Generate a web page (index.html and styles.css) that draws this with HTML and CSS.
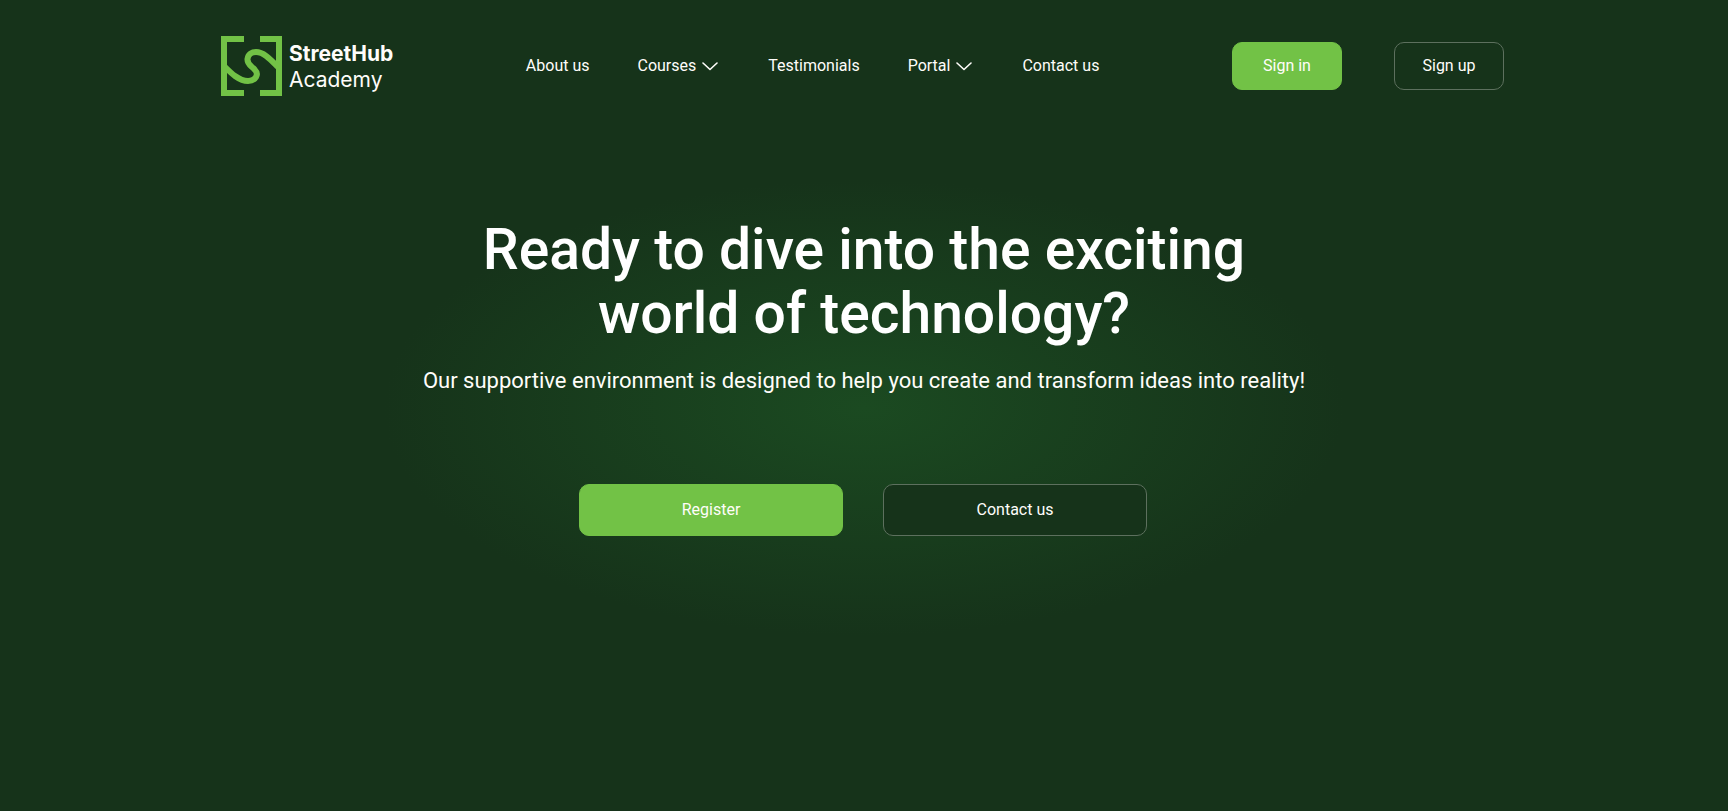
FILE: index.html
```html
<!DOCTYPE html>
<html lang="en">
<head>
<meta charset="utf-8">
<meta name="viewport" content="width=device-width, initial-scale=1">
<title>StreetHub Academy</title>
<link rel="stylesheet" href="styles.css">
</head>
<body>
<header class="header">
  <a class="brand" href="#">
    <svg class="brand-mark" viewBox="0 0 61 60" fill="none" aria-hidden="true">
      <path fill="#72c246" d="M0 0H23V6H6V54H23V60H0ZM39 0H61V60H39V54H55V6H39Z"/>
      <path stroke="#72c246" stroke-width="6" d="M4 31C10 37 18 45 27 45C35 45 38 38 34 34C31 30 26 29 26.500 23C27 18 31 16 35 16C43 16 50 24 57 31"/>
    </svg>
    <span class="brand-name"><strong>StreetHub</strong><span>Academy</span></span>
  </a>
  <nav class="nav" aria-label="Main">
    <a class="nav-link" href="#">About us</a>
    <a class="nav-link" href="#">Courses
      <svg class="chevron" viewBox="0 0 18 10" fill="none" aria-hidden="true"><path d="M1 2L8 8.500L15 2" stroke="currentColor" stroke-width="1.600" stroke-linecap="round" stroke-linejoin="round"/></svg>
    </a>
    <a class="nav-link" href="#">Testimonials</a>
    <a class="nav-link" href="#">Portal
      <svg class="chevron" viewBox="0 0 18 10" fill="none" aria-hidden="true"><path d="M1 2L8 8.500L15 2" stroke="currentColor" stroke-width="1.600" stroke-linecap="round" stroke-linejoin="round"/></svg>
    </a>
    <a class="nav-link" href="#">Contact us</a>
  </nav>
  <div class="account">
    <button class="button button-primary" type="button">Sign in</button>
    <button class="button button-outline" type="button">Sign up</button>
  </div>
</header>
<main class="hero">
  <h1 class="hero-title">Ready to dive into the exciting world of technology?</h1>
  <p class="hero-text">Our supportive environment is designed to help you create and transform ideas into reality!</p>
  <div class="hero-actions">
    <button class="button button-primary button-wide" type="button">Register</button>
    <button class="button button-outline button-wide" type="button">Contact us</button>
  </div>
</main>
</body>
</html>
```
FILE: styles.css
```css
* {
  box-sizing: border-box;
}

body {
  margin: 0;
  min-height: 100vh;
  background: radial-gradient(ellipse 480px 228px at 50% 408px, #1b4a21, #16331a) #16331a;
  color: #fffdfa;
  font: 16px/24px Roboto, "Liberation Sans", sans-serif;
}

a {
  color: inherit;
  text-decoration: none;
}

.header {
  display: flex;
  align-items: center;
  justify-content: space-between;
  max-width: 1286px;
  margin: 0 auto;
  padding: 36px 3px 0 0;
}

.brand {
  display: flex;
  align-items: center;
  gap: 7px;
}

.brand-mark {
  width: 61px;
  height: 60px;
}

.brand-name {
  display: flex;
  flex-direction: column;
  padding-top: 2px;
  font-family: Inter, "Liberation Sans", sans-serif;
  font-size: 21px;
  line-height: 26px;
}

.brand-name strong {
  font-weight: 700;
}

.nav {
  display: flex;
  gap: 48px;
}

.nav-link {
  display: flex;
  align-items: center;
  gap: 6px;
}

.chevron {
  width: 18px;
  height: 10px;
}

.account {
  display: flex;
  gap: 52px;
}

.button {
  min-width: 110px;
  height: 48px;
  padding: 0 24px;
  border: 1px solid transparent;
  border-radius: 10px;
  color: inherit;
  font: inherit;
  cursor: pointer;
}

.button-primary {
  background: #72c246;
  border-color: #72c246;
}

.button-outline {
  background: #16331a;
  border-color: #5d705e;
}

.hero {
  display: flex;
  flex-direction: column;
  align-items: center;
  padding-top: 122px;
  text-align: center;
}

.hero-title {
  max-width: 860px;
  margin: 0;
  color: #fff;
  font-size: 57px;
  font-weight: 500;
  line-height: 64px;
}

.hero-text {
  margin: 21px 0 0;
  font-size: 22px;
  line-height: 28px;
}

.hero-actions {
  display: flex;
  gap: 40px;
  margin-top: 89px;
  padding-right: 2px;
}

.button-wide {
  width: 264px;
  height: 52px;
}
```
